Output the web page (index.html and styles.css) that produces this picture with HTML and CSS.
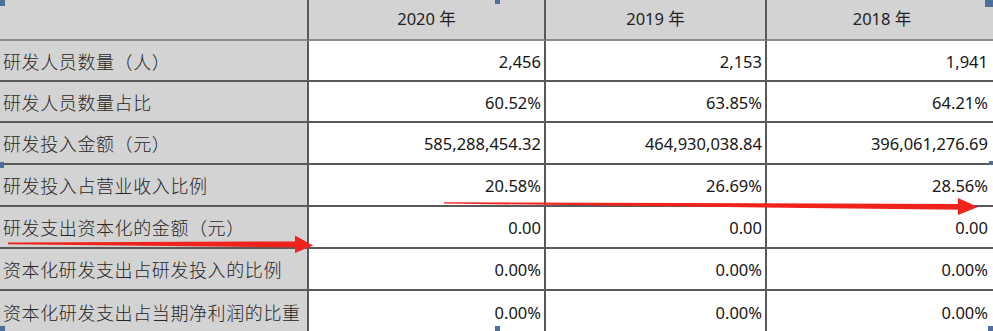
FILE: index.html
```html
<!DOCTYPE html>
<html lang="zh-CN">
<head>
<meta charset="utf-8">
<title>研发投入</title>
<link rel="stylesheet" href="styles.css">
</head>
<body>
<div class="page">
  <div class="sheet">
    <div class="cell label head"></div>
    <div class="cell year head">2020 年</div>
    <div class="cell year head">2019 年</div>
    <div class="cell year head last">2018 年</div>

    <div class="cell label">研发人员数量（人）</div>
    <div class="cell num">2,456</div>
    <div class="cell num">2,153</div>
    <div class="cell num last">1,941</div>

    <div class="cell label">研发人员数量占比</div>
    <div class="cell num">60.52%</div>
    <div class="cell num">63.85%</div>
    <div class="cell num last">64.21%</div>

    <div class="cell label">研发投入金额（元）</div>
    <div class="cell num">585,288,454.32</div>
    <div class="cell num">464,930,038.84</div>
    <div class="cell num last">396,061,276.69</div>

    <div class="cell label">研发投入占营业收入比例</div>
    <div class="cell num">20.58%</div>
    <div class="cell num">26.69%</div>
    <div class="cell num last">28.56%</div>

    <div class="cell label">研发支出资本化的金额（元）</div>
    <div class="cell num">0.00</div>
    <div class="cell num">0.00</div>
    <div class="cell num last">0.00</div>

    <div class="cell label">资本化研发支出占研发投入的比例</div>
    <div class="cell num">0.00%</div>
    <div class="cell num">0.00%</div>
    <div class="cell num last">0.00%</div>

    <div class="cell label end">资本化研发支出占当期净利润的比重</div>
    <div class="cell num end">0.00%</div>
    <div class="cell num end">0.00%</div>
    <div class="cell num end last">0.00%</div>
  </div>

  <svg class="arrows" width="993" height="331" viewBox="0 0 993 331" aria-hidden="true">
    <polygon fill="#f0231c" points="444,202.3 961,204 961,209.8 444,203.6"/>
    <polygon fill="#f0231c" points="958,198 978,207 958,215"/>
    <polygon fill="#f0231c" points="8,242.4 298,241.4 298,247.4 8,244.2"/>
    <polygon fill="#f0231c" points="295,235.5 313,245.5 295,253"/>
  </svg>

  <span class="handle h1"></span>
  <span class="handle h2"></span>
  <span class="handle h3"></span>
  <span class="handle h4"></span>
  <span class="handle h5"></span>
  <span class="handle h6"></span>
  <span class="handle h7"></span>
  <span class="handle h8"></span>
</div>
</body>
</html>
```

FILE: styles.css
```css
html, body {
  margin: 0;
  padding: 0;
  background: #ffffff;
}

.page {
  position: relative;
  width: 993px;
  height: 331px;
  overflow: hidden;
}

.sheet {
  display: grid;
  grid-template-columns: 309px 237px 221px 226px;
  grid-template-rows: 41px 41px 41px 42px 42px 42px 42px 42px;
  width: 993px;
}

.cell {
  box-sizing: border-box;
  display: flex;
  align-items: center;
  border-right: 2px solid #595959;
  border-bottom: 2px solid #595959;
  background: #ffffff;
  color: #161616;
  font-family: "Noto Sans", "Noto Sans CJK SC", sans-serif;
  font-size: 16.5px;
  white-space: nowrap;
}

.cell.last {
  border-right: none;
}

.cell.end {
  border-bottom: none;
}

.label {
  background: #d3d3d3;
  color: #262626;
  font-family: "Noto Sans CJK SC", sans-serif;
  font-weight: 300;
  font-size: 18px;
  letter-spacing: 0.6px;
  padding-left: 3px;
}

.head {
  background: #d3d3d3;
  border-bottom-color: #8c8c8c;
  padding-bottom: 3px;
}

.year {
  justify-content: center;
  color: #222222;
}

.year.last {
  padding-left: 4px;
}

.num {
  justify-content: flex-end;
  padding-right: 3px;
  padding-top: 1px;
}

.num.last {
  padding-right: 5px;
}

.arrows {
  position: absolute;
  left: 0;
  top: 0;
  pointer-events: none;
}

.handle {
  position: absolute;
  width: 5px;
  height: 6px;
  background: #4d6f99;
}

.h1 { left: 0; top: 0; }
.h2 { left: 495px; top: 0; height: 4px; }
.h3 { left: 985px; top: 0; width: 8px; height: 7px; }
.h4 { left: 0; top: 162px; width: 4px; }
.h5 { left: 989px; top: 161px; width: 4px; height: 4px; }
.h6 { left: 0; top: 326px; }
.h7 { left: 495px; top: 326px; }
.h8 { left: 988px; top: 326px; }
```
